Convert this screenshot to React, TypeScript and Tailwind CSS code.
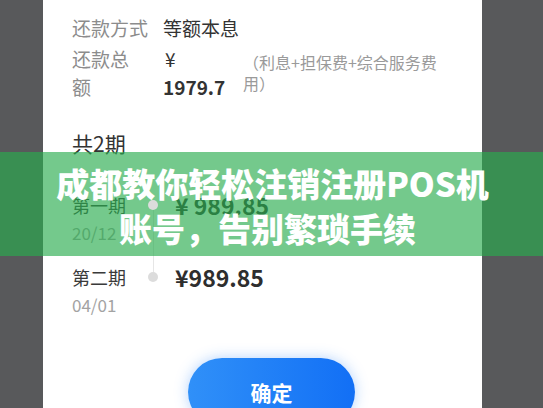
const cjk = { fontFamily: '"Noto Sans CJK SC", "Noto Sans", sans-serif' };

type Installment = { name: string; date: string; amount: string };

const installments: Installment[] = [
  { name: "第一期", date: "20/12", amount: "¥ 989.85" },
  { name: "第二期", date: "04/01", amount: "¥989.85" },
];

function PlanRow({ item }: { item: Installment }) {
  return (
    <div className="flex">
      <div className="w-[71px]">
        <p className="text-[18px] leading-[28px] text-[#3a3a3a]">{item.name}</p>
        <p className="text-[17px] leading-[28px] text-[#a3a3a3]">{item.date}</p>
      </div>
      <div className="flex h-[28px] w-[20px] items-center justify-center">
        <span className="relative z-10 h-[10px] w-[10px] rounded-full bg-[#dcdcdc]" />
      </div>
      <p className="ml-3 text-[23px] font-bold leading-[28px] text-[#2e2e2e]">{item.amount}</p>
    </div>
  );
}

export default function App() {
  return (
    <div className="relative h-[408px] w-[543px] overflow-hidden bg-[#58595b]" style={cjk}>
      <div className="ml-[43px] h-full w-[439px] bg-white pl-[29px] pt-[14px]">
        <div className="flex text-[19px] leading-[28px]">
          <span className="w-[91px] text-[#8c8c8c]">还款方式</span>
          <span className="text-[#333]">等额本息</span>
        </div>

        <div className="mt-[3px] flex">
          <div className="w-[91px] text-[19px] leading-[28px] text-[#8c8c8c]">
            还款总
            <br />
            额
          </div>
          <div className="w-[80px] text-[19px] leading-[28px] text-[#333]">
            <p className="pl-[2px] font-normal">¥</p>
            <p className="font-bold">1979.7</p>
          </div>
          <div className="mt-[7px] whitespace-nowrap text-[16px] leading-[21px] text-[#9a9a9a]">
            （利息+担保费+综合服务费
            <br />
            用）
          </div>
        </div>

        <p className="mt-[28px] text-[21px] leading-[28px] text-[#333]">共2期</p>

        <div className="relative mt-[34px] flex flex-col gap-[16px]">
          <span className="absolute left-[81px] top-[14px] h-[72px] w-px bg-[#e6e6e6]" />
          {installments.map((item) => (
            <PlanRow key={item.name} item={item} />
          ))}
        </div>

        <button
          type="button"
          className="ml-[116px] mt-[39px] flex h-[68px] w-[167px] justify-center rounded-full bg-gradient-to-r from-[#3090f8] to-[#126ff5] pt-[20px] text-[21px] font-bold leading-[28px] text-white shadow-[0_0_14px_rgba(40,130,250,0.35)]"
        >
          确定
        </button>
      </div>

      <div className="absolute left-0 top-[152px] h-[104px] w-full bg-[#2aac4f]/65 pt-[9px] text-center text-[33px] font-black leading-[45px] text-white">
        <p className="pl-[2px]">成都教你轻松注销注册POS机</p>
        <p className="pr-[8px]">账号，告别繁琐手续</p>
      </div>
    </div>
  );
}
